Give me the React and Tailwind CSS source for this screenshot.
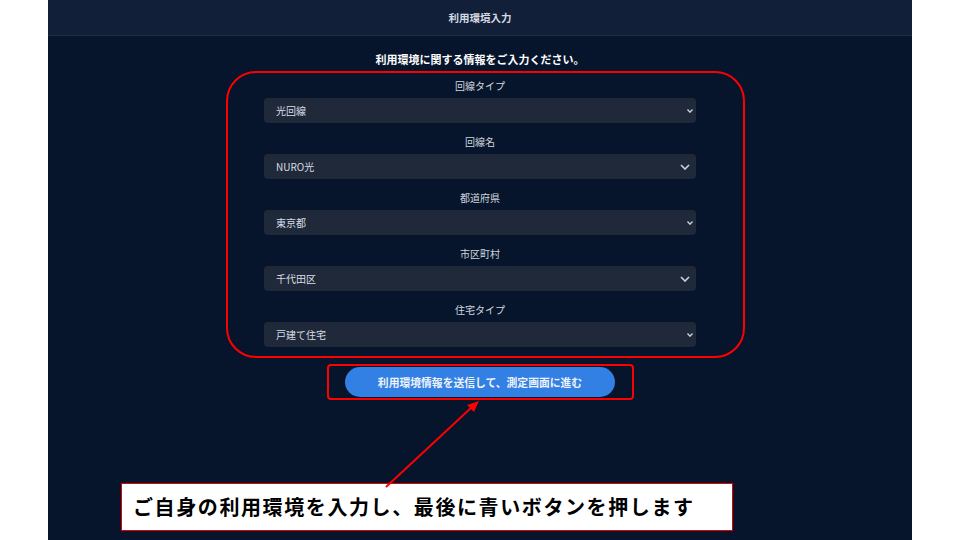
const fields = [
  { label: "回線タイプ", value: "光回線", chevron: "small" },
  { label: "回線名", value: "NURO光", chevron: "large" },
  { label: "都道府県", value: "東京都", chevron: "small" },
  { label: "市区町村", value: "千代田区", chevron: "large" },
  { label: "住宅タイプ", value: "戸建て住宅", chevron: "small" },
];

const font = { fontFamily: '"Noto Sans CJK JP", "Noto Sans", sans-serif' };

function Chevron({ size }) {
  if (size === "large") {
    return (
      <svg width="10" height="6" viewBox="0 0 10 6" className="mr-[6px]">
        <polyline points="1,1 5,5 9,1" fill="none" stroke="#cbd5e1" strokeWidth="1.6" />
      </svg>
    );
  }
  return (
    <svg width="6" height="4" viewBox="0 0 6 4" className="mr-[3px]">
      <polyline points="0.5,0.5 3,3.2 5.5,0.5" fill="none" stroke="#cbd5e1" strokeWidth="1.3" />
    </svg>
  );
}

function SelectField({ label, value, chevron, first }) {
  return (
    <div className={first ? "flex w-[432px] flex-col items-center" : "mt-[12px] flex w-[432px] flex-col items-center"}>
      <p className="h-[14px] text-[10px] leading-[14px] text-[#d1d6de]">{label}</p>
      <div className="mt-[5px] flex h-[25px] w-[432px] items-center justify-between rounded-[4px] bg-[#1f2939] pl-[12px]">
        <span className="text-[10px] text-[#d8dde5]">{value}</span>
        <Chevron size={chevron} />
      </div>
    </div>
  );
}

export default function App() {
  return (
    <div className="relative flex h-[540px] w-[960px] justify-center overflow-hidden bg-white" style={font}>
      <div className="flex h-full w-[864px] flex-col items-start bg-[#06152b]">
        <header className="flex h-[36px] w-full items-center justify-center border-b border-[#1e2c44] bg-[#111f38]">
          <h1 className="text-[10.5px] font-bold text-[#d4d9e1]">利用環境入力</h1>
        </header>

        <p className="mt-[15px] w-full text-center text-[11px] font-bold leading-[16px] text-white">
          利用環境に関する情報をご入力ください。
        </p>

        <div className="ml-[178px] mt-[4px] flex w-[519px] flex-col items-start rounded-[30px] border-2 border-[#ff0000] pb-[9px] pl-[36px] pt-[6px]">
          {fields.map((f, i) => (
            <SelectField key={f.label} {...f} first={i === 0} />
          ))}
        </div>

        <div className="ml-[279px] mt-[6px] flex h-[36px] w-[307px] items-center rounded-[4px] border-2 border-[#ff0000] pl-[16px]">
          <button
            type="button"
            className="flex h-[30px] w-[270px] items-center justify-center rounded-full bg-[#3280e4] text-[10.8px] font-bold text-[#eef3fb]"
          >
            利用環境情報を送信して、測定画面に進む
          </button>
        </div>

        <div className="ml-[73px] mt-[83px] flex h-[48px] w-[612px] items-center border border-[#e00000] bg-white pl-[11px]">
          <span className="text-[20px] font-bold tracking-[1.6px] text-black">
            ご自身の利用環境を入力し、最後に青いボタンを押します
          </span>
        </div>
      </div>

      <svg className="pointer-events-none absolute left-0 top-0" width="960" height="540" viewBox="0 0 960 540">
        <line x1="386" y1="487" x2="472" y2="407" stroke="#ff0000" strokeWidth="2" />
        <polygon points="479,401 467,405 474,412" fill="#ff0000" />
      </svg>
    </div>
  );
}
